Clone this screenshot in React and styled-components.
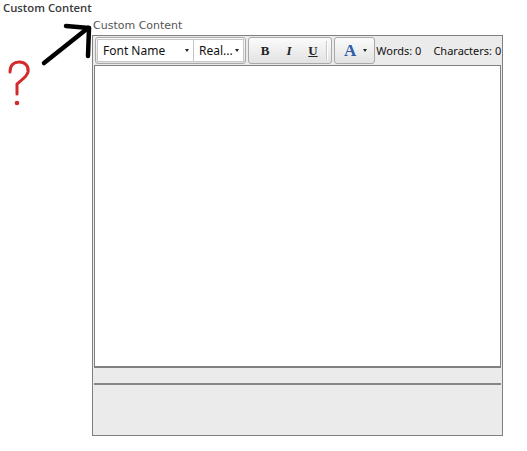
import React from "react";
import styled, { createGlobalStyle, css } from "styled-components";

const GlobalStyle = createGlobalStyle`
  html, body {
    margin: 0;
    padding: 0;
    background: #fff;
  }
  body {
    font-family: "Noto Sans", "Liberation Sans", sans-serif;
  }
`;

const Page = styled.div`
  width: 527px;
  height: 451px;
  padding: 1px 0 0 3px;
  box-sizing: border-box;
  overflow: hidden;
`;

const PageTitle = styled.div`
  font-family: "Open Sans", "Noto Sans", sans-serif;
  font-size: 11.3px;
  font-weight: 600;
  color: #3a3a3a;
  line-height: 14px;
  height: 15px;
`;

const Row = styled.div`
  display: flex;
  align-items: flex-start;
`;

const Notes = styled.svg`
  flex: none;
  width: 89px;
  height: 100px;
`;

const Field = styled.div`
  display: flex;
  flex-direction: column;
  width: 411px;
`;

const FieldLabel = styled.div`
  font-family: "DejaVu Sans", Verdana, sans-serif;
  font-size: 11px;
  color: #555;
  line-height: 17px;
  height: 19px;
  padding: 1px 0 0 1px;
  box-sizing: border-box;
`;

const EditorBox = styled.div`
  border: 1px solid #808080;
  background: #ebebeb;
  height: 401px;
  box-sizing: border-box;
  display: flex;
  flex-direction: column;
`;

const Toolbar = styled.div`
  display: flex;
  align-items: center;
  height: 29px;
  padding: 0 2px;
  gap: 2px;
`;

const Group = styled.div`
  display: flex;
  align-items: center;
  height: 27px;
  box-sizing: border-box;
  border: 1px solid #a9a9a9;
  border-radius: 3px;
  background: linear-gradient(#fbfbfb, #e2e2e2);
  padding: 0 1px;
`;

const Select = styled.div`
  display: flex;
  align-items: center;
  justify-content: space-between;
  width: ${(p) => p.$width}px;
  height: 23px;
  box-sizing: border-box;
  background: #fff;
  border: 1px solid #c6c6c6;
  padding: 0 4px 0 5px;
  font-size: 12px;
  color: #111;
  & + & {
    border-left: none;
  }
`;

const Caret = styled.span`
  width: 0;
  height: 0;
  border-left: 2.5px solid transparent;
  border-right: 2.5px solid transparent;
  border-top: 3px solid #222;
`;

const ToolButton = styled.span`
  width: 24px;
  text-align: center;
  font-family: "Liberation Serif", serif;
  font-size: 13px;
  font-weight: bold;
  color: #222;
  ${(p) =>
    p.$italic &&
    css`
      font-style: italic;
    `};
  ${(p) =>
    p.$underline &&
    css`
      text-decoration: underline;
    `};
`;

const Divider = styled.span`
  width: 1px;
  height: 19px;
  background: #c8c8c8;
  border-right: 1px solid #fff;
  margin: 0 2px 0 1px;
`;

const ColorButton = styled.span`
  display: flex;
  align-items: center;
  gap: 7px;
  padding: 0 6px 0 8px;
  font-family: "Liberation Serif", serif;
  font-size: 17px;
  font-weight: bold;
  color: #2b5aa8;
`;

const Counter = styled.span`
  font-size: 11px;
  color: #111;
  white-space: nowrap;
  margin-left: -1px;
  & + & {
    margin-left: 10px;
  }
`;

const Editor = styled.div`
  margin: 0 1px;
  height: 303px;
  box-sizing: border-box;
  background: #fff;
  border: 1px solid #808080;
  border-bottom-width: 2px;
`;

const StatusLine = styled.div`
  margin: 15px 1px 0;
  height: 0;
  border-top: 2px solid #868686;
`;

const App = () => (
  <Page>
    <GlobalStyle />
    <PageTitle>Custom Content</PageTitle>
    <Row>
      <Notes viewBox="0 0 89 100">
        {/* arrow pointing at the field label */}
        <g stroke="#000" strokeWidth="4.5" fill="none" strokeLinecap="round">
          <path d="M41 47 L85 12" />
          <path d="M63 10 L86 12" />
          <path d="M86 12 L85 40" />
        </g>
        {/* question mark */}
        <g stroke="#d32a2a" strokeWidth="3" fill="none" strokeLinecap="round">
          <path d="M7 56 C7 49 11 46 16 46 C22 46 26 50 25 56 C24 61 18 64 14 68 L14 78" />
        </g>
        <circle cx="14" cy="87" r="2.3" fill="#d32a2a" />
      </Notes>
      <Field>
        <FieldLabel>Custom Content</FieldLabel>
        <EditorBox>
          <Toolbar>
            <Group>
              <Select $width={97}>
                Font Name <Caret />
              </Select>
              <Select $width={50}>
                Real... <Caret />
              </Select>
            </Group>
            <Group>
              <ToolButton style={{ marginLeft: 3 }}>B</ToolButton>
              <ToolButton $italic>I</ToolButton>
              <ToolButton $underline>U</ToolButton>
              <Divider />
            </Group>
            <Group>
              <ColorButton>
                A <Caret />
              </ColorButton>
            </Group>
            <Counter>Words: 0</Counter>
            <Counter>Characters: 0</Counter>
          </Toolbar>
          <Editor />
          <StatusLine />
        </EditorBox>
      </Field>
    </Row>
  </Page>
);

export default App;
